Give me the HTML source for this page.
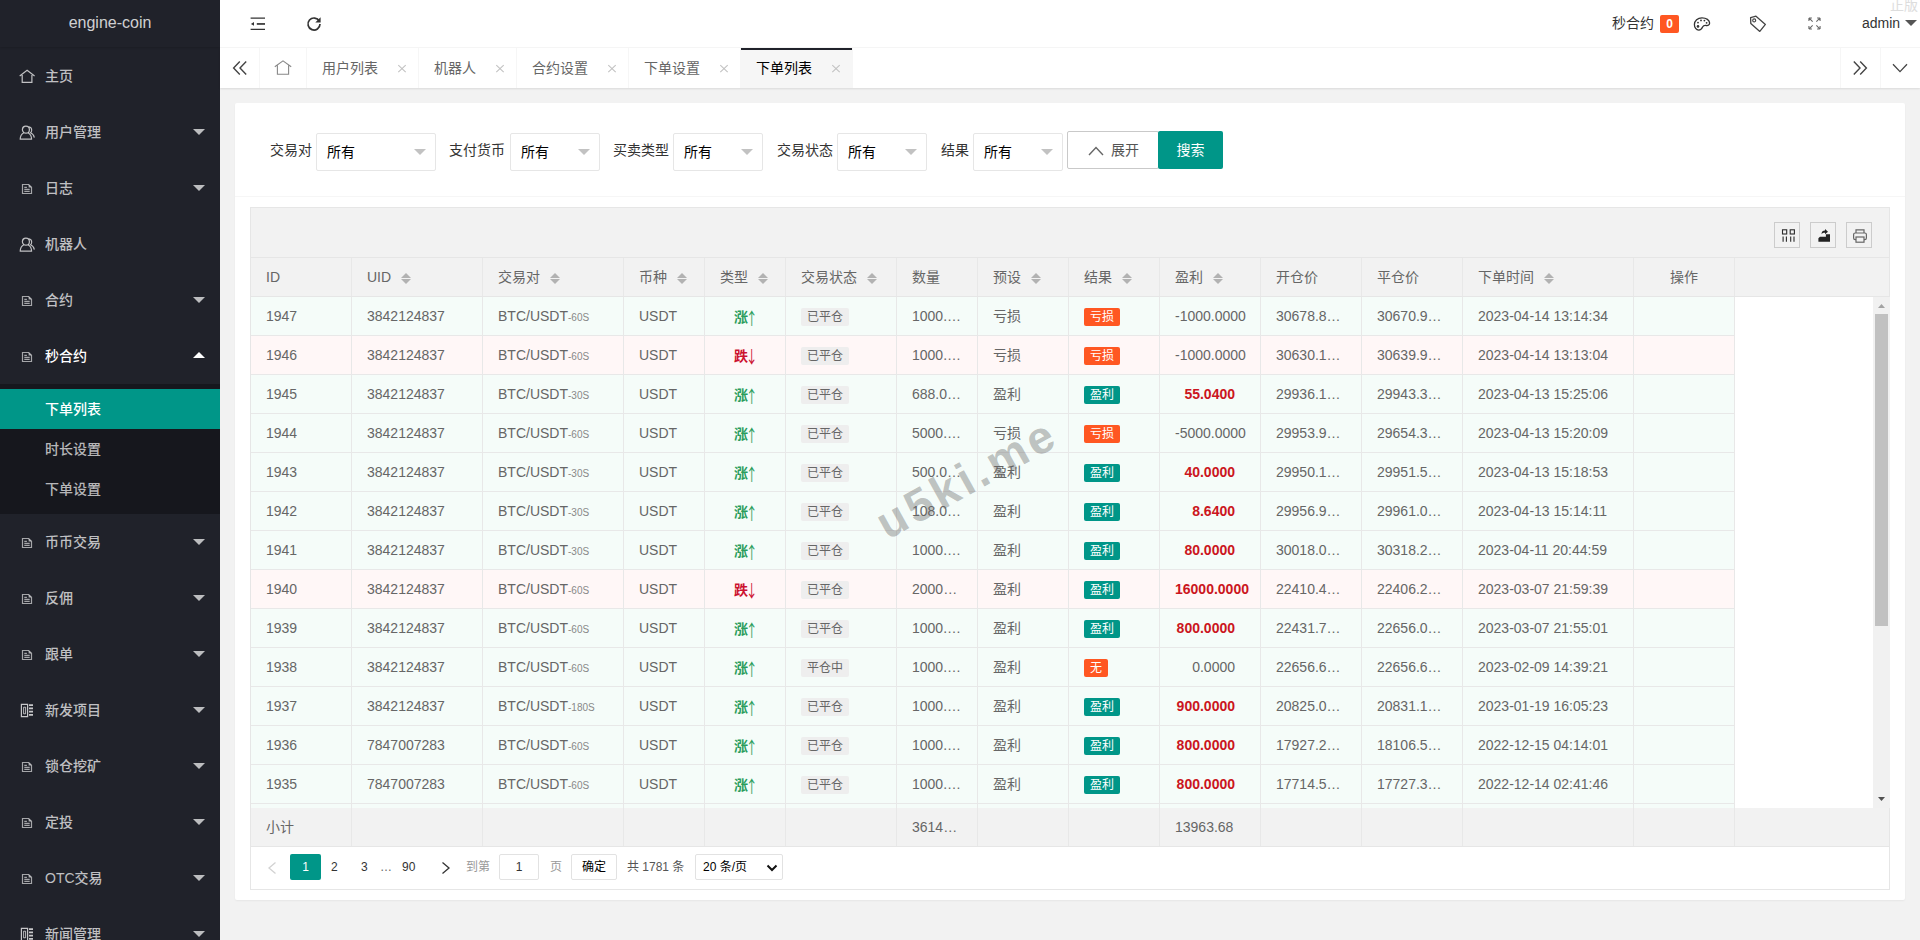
<!DOCTYPE html>
<html lang="zh-CN">
<head>
<meta charset="utf-8">
<title>engine-coin</title>
<style>
*{box-sizing:border-box;margin:0;padding:0}
html,body{width:1920px;height:940px;overflow:hidden;background:#f2f2f2}
body{font:14px/24px "Liberation Sans","Noto Sans CJK SC",sans-serif;color:#333;position:relative}
i{font-style:normal}
/* side */
.side{position:absolute;left:0;top:0;width:220px;height:940px;background:#20222a;overflow:hidden;color:rgba(255,255,255,.8)}
.logo{position:absolute;left:0;top:0;width:220px;height:47px;line-height:45px;text-align:center;font-size:16px;color:rgba(255,255,255,.8);box-shadow:0 1px 2px 0 rgba(0,0,0,.15)}
.mi{position:absolute;left:0;width:220px;height:56px;line-height:56px;color:rgba(255,255,255,.72);font-size:14px;font-weight:500}
.mi.on{color:#fff}
.mi .ic{position:absolute;color:rgba(255,255,255,.72)}
.mi .ic.h{left:19px;top:21px}
.mi .ic.u{left:19px;top:21px}
.mi .ic.f{left:21px;top:23px;color:rgba(255,255,255,.6)}
.mi .ic.t{left:20px;top:21px;color:rgba(255,255,255,.75)}
.mi span{position:absolute;left:45px;top:0}
.arr{position:absolute;right:15px;top:50%;margin-top:-3px;border:6px solid transparent;border-top-color:rgba(255,255,255,.7);border-bottom-width:0}
.arr.up{border-top-width:0;border-bottom:6px solid #fff;margin-top:-4px}
.sub{position:absolute;left:0;top:384px;width:220px;height:130px;background:rgba(0,0,0,.3);padding:5px 0}
.sub div{height:40px;line-height:40px;padding-left:45px;color:rgba(255,255,255,.7);font-weight:500}
.sub div.this{background:#009688;color:#fff}
/* header */
.hd{position:absolute;left:220px;top:0;width:1700px;height:48px;background:#fff;border-bottom:1px solid #f6f6f6}
.tabs{position:absolute;left:220px;top:48px;width:1700px;height:40px;background:#fff;box-shadow:0 1px 2px 0 rgba(0,0,0,.1)}
.tab{position:absolute;top:0;height:40px;line-height:40px;border-right:1px solid #f6f6f6;color:#666;padding-left:15px;font-size:14px}
.tab.this{background:#f6f6f6;color:#000}
.tab.this:before{content:"";position:absolute;left:0;top:0;width:100%;height:2px;background:#20222a}
.tab .x{position:absolute;right:9px;top:14px;width:14px;height:14px}
.tb{position:absolute;top:0;width:40px;height:40px;border-right:1px solid #f6f6f6}
.tbl{border-right:0;border-left:1px solid #f6f6f6}
/* card */
.card{position:absolute;left:235px;top:103px;width:1670px;height:797px;background:#fff;border-radius:2px;box-shadow:0 1px 2px 0 rgba(0,0,0,.05)}
.cline{position:absolute;left:0;top:93px;width:1670px;height:1px;background:#f6f6f6}
.lb{position:absolute;top:35px;height:24px;line-height:24px;font-size:14px;color:#333;white-space:nowrap}
.sel{position:absolute;top:30px;height:38px;border:1px solid #e6e6e6;border-radius:2px;background:#fff;padding-left:10px;line-height:37px;color:#000;font-size:14px}
.sel i{position:absolute;right:9px;top:50%;margin-top:-3px;border:6px solid transparent;border-top-color:#c2c2c2;border-bottom-width:0}
.btn{position:absolute;top:28px;height:38px;line-height:38px;font-size:14px;text-align:center;border-radius:2px}
.btn1{left:832px;width:92px;border:1px solid #c9c9c9;background:#fff;color:#555;line-height:36px}
.btn2{left:923px;width:65px;background:#009688;color:#fff}
/* table */
.tv{position:absolute;left:250px;top:207px;width:1640px;height:683px;border:1px solid #e6e6e6;background:#fff}
.tool{position:absolute;left:0;top:0;width:1638px;height:50px;background:#f2f2f2;border-bottom:1px solid #e6e6e6}
.tbtn{position:absolute;top:14px;width:26px;height:26px;border:1px solid #ccc;background:transparent}
.tv table{border-collapse:separate;border-spacing:0}
.tv th,.tv td{border-right:1px solid #e8e8e8;border-bottom:1px solid #e8e8e8;padding:5px 0;height:39px;font-weight:400;text-align:left;font-size:14px;color:#666}
.c{height:28px;line-height:28px;padding:0 15px;overflow:hidden;white-space:nowrap;position:relative}
.thd{position:absolute;left:0;top:50px;width:1638px;height:39px;background:#f2f2f2;border-bottom:1px solid #e6e6e6;overflow:hidden}
.tbd{position:absolute;left:0;top:89px;width:1638px;height:511px;overflow:hidden;background:#fff}
.ttl{position:absolute;left:0;top:600px;width:1638px;height:39px;background:#f2f2f2;border-bottom:1px solid #e6e6e6;overflow:hidden}
.ttl td{border-bottom:0;height:38px}
tr.up td{background:#f5fcf9}
tr.down td{background:#fff7f7}
small{font-size:10px;color:#888}
.sort{display:inline-block;position:relative;width:10px;height:20px;margin-left:10px;vertical-align:middle;top:-1px}
.sort i{position:absolute;left:0;border:5px solid transparent}
.sort .su{top:6px;border-top-width:0;border-bottom-color:#b2b2b2}
.sort .sd{top:12px;border-bottom-width:0;border-top-color:#b2b2b2}
.t-up{color:#2a9d5c;font-weight:700;position:relative;top:1px}
.ar{display:inline-block;font-family:'Noto Sans CJK SC',sans-serif;font-weight:400;font-size:17px;line-height:20px;width:8px;text-indent:-5px;transform:scaleX(.7);position:relative;top:3px;vertical-align:baseline}
.t-down .ar{top:2px}
.t-down{color:#cc1230;font-weight:700;position:relative;top:1px}
td.ct .c{text-align:center}
.st{display:inline-block;height:18px;line-height:18px;padding:0 6px;background:#eee;border-radius:2px;font-size:12px;color:#666;vertical-align:middle;position:relative;top:0}
.bd{display:inline-block;height:18px;line-height:18px;padding:0 6px;border-radius:2px;font-size:12px;color:#fff;vertical-align:middle;position:relative;top:0}
.bd-o{background:#ff5722}
.bd-g{background:#009688}
.pf{display:inline-block;width:60px;text-align:right;white-space:nowrap;direction:ltr}
.pfb{color:#cb1520;font-weight:700}
.sb{position:absolute;left:1622px;top:89px;width:17px;height:511px;background:#f1f1f1}
.sbt{position:absolute;left:2px;top:17px;width:13px;height:312px;background:#c1c1c1}
.pg{position:absolute;left:0;top:640px;width:1638px;height:41px;font-size:12px;color:#333}
.pg span,.pg b{position:absolute;top:6px;height:26px;line-height:26px;font-weight:400;white-space:nowrap}
.wm{position:absolute;left:850px;top:451px;width:230px;height:56px;line-height:56px;font-size:46px;font-weight:700;color:rgba(100,100,100,.4);transform:rotate(-29deg);text-align:center;letter-spacing:4px;padding-left:4px;white-space:nowrap}
</style>
</head>
<body>
<div class="side">
<div class="logo">engine-coin</div>
<div class="mi" style="top:48px"><svg class="ic h" viewBox="0 0 17 15" width="17" height="15"><path d="M0.700 6.900L8.100 1.200l7.500 5.700M3.200 6v7.400h9.700V6" fill="none" stroke="currentColor" stroke-width="1.200"/></svg><span>主页</span></div>
<div class="mi" style="top:104px"><svg class="ic u" viewBox="0 0 17 16" width="17" height="16"><circle cx="6.900" cy="4.700" r="3.500" fill="none" stroke="currentColor" stroke-width="1.200"/><path d="M4.800 7.800Q1.300 9.600 1.200 14.200H12.600Q12.500 9.600 9 7.800" fill="none" stroke="currentColor" stroke-width="1.200" stroke-linejoin="round"/><path d="M9.800 1.700Q12.800 2.200 12.700 5.200Q12.600 6.800 11.500 7.700Q14.900 9.200 15.300 12.600" fill="none" stroke="currentColor" stroke-width="1.100"/></svg><span>用户管理</span><i class="arr"></i></div>
<div class="mi" style="top:160px"><svg class="ic f" viewBox="0 0 12 12" width="12" height="12"><path d="M1.500 1.500h6.200l2.800 2.800v6.200H1.500z" fill="none" stroke="currentColor" stroke-width="1.200"/><path d="M3.300 4.300h2.600M3.300 6.300h5.400M3.300 8.300h5.400" fill="none" stroke="currentColor" stroke-width="1.200"/><path d="M7.600 1.600v2.800h2.800" fill="currentColor" stroke="none"/></svg><span>日志</span><i class="arr"></i></div>
<div class="mi" style="top:216px"><svg class="ic u" viewBox="0 0 17 16" width="17" height="16"><circle cx="6.900" cy="4.700" r="3.500" fill="none" stroke="currentColor" stroke-width="1.200"/><path d="M4.800 7.800Q1.300 9.600 1.200 14.200H12.600Q12.500 9.600 9 7.800" fill="none" stroke="currentColor" stroke-width="1.200" stroke-linejoin="round"/><path d="M9.800 1.700Q12.800 2.200 12.700 5.200Q12.600 6.800 11.500 7.700Q14.900 9.200 15.300 12.600" fill="none" stroke="currentColor" stroke-width="1.100"/></svg><span>机器人</span></div>
<div class="mi" style="top:272px"><svg class="ic f" viewBox="0 0 12 12" width="12" height="12"><path d="M1.500 1.500h6.200l2.800 2.800v6.200H1.500z" fill="none" stroke="currentColor" stroke-width="1.200"/><path d="M3.300 4.300h2.600M3.300 6.300h5.400M3.300 8.300h5.400" fill="none" stroke="currentColor" stroke-width="1.200"/><path d="M7.600 1.600v2.800h2.800" fill="currentColor" stroke="none"/></svg><span>合约</span><i class="arr"></i></div>
<div class="mi on" style="top:328px"><svg class="ic f" viewBox="0 0 12 12" width="12" height="12"><path d="M1.500 1.500h6.200l2.800 2.800v6.200H1.500z" fill="none" stroke="currentColor" stroke-width="1.200"/><path d="M3.300 4.300h2.600M3.300 6.300h5.400M3.300 8.300h5.400" fill="none" stroke="currentColor" stroke-width="1.200"/><path d="M7.600 1.600v2.800h2.800" fill="currentColor" stroke="none"/></svg><span>秒合约</span><i class="arr up"></i></div>
<div class="mi" style="top:514px"><svg class="ic f" viewBox="0 0 12 12" width="12" height="12"><path d="M1.500 1.500h6.200l2.800 2.800v6.200H1.500z" fill="none" stroke="currentColor" stroke-width="1.200"/><path d="M3.300 4.300h2.600M3.300 6.300h5.400M3.300 8.300h5.400" fill="none" stroke="currentColor" stroke-width="1.200"/><path d="M7.600 1.600v2.800h2.800" fill="currentColor" stroke="none"/></svg><span>币币交易</span><i class="arr"></i></div>
<div class="mi" style="top:570px"><svg class="ic f" viewBox="0 0 12 12" width="12" height="12"><path d="M1.500 1.500h6.200l2.800 2.800v6.200H1.500z" fill="none" stroke="currentColor" stroke-width="1.200"/><path d="M3.300 4.300h2.600M3.300 6.300h5.400M3.300 8.300h5.400" fill="none" stroke="currentColor" stroke-width="1.200"/><path d="M7.600 1.600v2.800h2.800" fill="currentColor" stroke="none"/></svg><span>反佣</span><i class="arr"></i></div>
<div class="mi" style="top:626px"><svg class="ic f" viewBox="0 0 12 12" width="12" height="12"><path d="M1.500 1.500h6.200l2.800 2.800v6.200H1.500z" fill="none" stroke="currentColor" stroke-width="1.200"/><path d="M3.300 4.300h2.600M3.300 6.300h5.400M3.300 8.300h5.400" fill="none" stroke="currentColor" stroke-width="1.200"/><path d="M7.600 1.600v2.800h2.800" fill="currentColor" stroke="none"/></svg><span>跟单</span><i class="arr"></i></div>
<div class="mi" style="top:682px"><svg class="ic t" viewBox="0 0 14 15" width="14" height="15"><path d="M1.400 1.400h6.200v12.200H1.400z" fill="none" stroke="currentColor" stroke-width="1.200"/><path d="M3.600 4.200h2v6.600h-2z" fill="none" stroke="currentColor" stroke-width=".9"/><path d="M9 2.200h4M9 5.400h4M9 8.600h4M9 11.800h4" stroke="currentColor" stroke-width="1.700" fill="none"/></svg><span>新发项目</span><i class="arr"></i></div>
<div class="mi" style="top:738px"><svg class="ic f" viewBox="0 0 12 12" width="12" height="12"><path d="M1.500 1.500h6.200l2.800 2.800v6.200H1.500z" fill="none" stroke="currentColor" stroke-width="1.200"/><path d="M3.300 4.300h2.600M3.300 6.300h5.400M3.300 8.300h5.400" fill="none" stroke="currentColor" stroke-width="1.200"/><path d="M7.600 1.600v2.800h2.800" fill="currentColor" stroke="none"/></svg><span>锁仓挖矿</span><i class="arr"></i></div>
<div class="mi" style="top:794px"><svg class="ic f" viewBox="0 0 12 12" width="12" height="12"><path d="M1.500 1.500h6.200l2.800 2.800v6.200H1.500z" fill="none" stroke="currentColor" stroke-width="1.200"/><path d="M3.300 4.300h2.600M3.300 6.300h5.400M3.300 8.300h5.400" fill="none" stroke="currentColor" stroke-width="1.200"/><path d="M7.600 1.600v2.800h2.800" fill="currentColor" stroke="none"/></svg><span>定投</span><i class="arr"></i></div>
<div class="mi" style="top:850px"><svg class="ic f" viewBox="0 0 12 12" width="12" height="12"><path d="M1.500 1.500h6.200l2.800 2.800v6.200H1.500z" fill="none" stroke="currentColor" stroke-width="1.200"/><path d="M3.300 4.300h2.600M3.300 6.300h5.400M3.300 8.300h5.400" fill="none" stroke="currentColor" stroke-width="1.200"/><path d="M7.600 1.600v2.800h2.800" fill="currentColor" stroke="none"/></svg><span>OTC交易</span><i class="arr"></i></div>
<div class="mi" style="top:906px"><svg class="ic t" viewBox="0 0 14 15" width="14" height="15"><path d="M1.400 1.400h6.200v12.200H1.400z" fill="none" stroke="currentColor" stroke-width="1.200"/><path d="M3.600 4.200h2v6.600h-2z" fill="none" stroke="currentColor" stroke-width=".9"/><path d="M9 2.200h4M9 5.400h4M9 8.600h4M9 11.800h4" stroke="currentColor" stroke-width="1.700" fill="none"/></svg><span>新闻管理</span><i class="arr"></i></div>
<div class="sub"><div class="this">下单列表</div><div>时长设置</div><div>下单设置</div></div>
</div>

<div class="hd">

<svg style="position:absolute;left:30px;top:16px" width="16" height="16" viewBox="0 0 16 16"><path d="M0.600 2.200h14.400M0.600 13.400h14.400" stroke="#333" stroke-width="1.300" fill="none"/><path d="M6.800 7.950h8.200" stroke="#333" stroke-width="1.700" fill="none"/><path d="M0.900 7.950l3.100-1.900v3.800z" fill="#333"/></svg>
<svg style="position:absolute;left:86px;top:16px" width="16" height="16" viewBox="0 0 16 16"><path d="M13.300 5.200A6 6 0 1 0 14 8" stroke="#333" stroke-width="1.700" fill="none"/><path d="M14.600 1.200v5.300h-5.300z" fill="#333"/></svg>
<span style="position:absolute;left:1392px;top:11px;line-height:24px;font-size:14px;color:#333">秒合约</span>
<span style="position:absolute;left:1440px;top:15px;width:19px;height:18px;line-height:18px;background:#ff5722;border-radius:2px;color:#fff;font-size:12px;font-weight:700;text-align:center">0</span>
<svg style="position:absolute;left:1473px;top:16px" width="18" height="16" viewBox="0 0 18 16"><path d="M9 1.800c4.300 0 7.600 2.400 7.600 5.200 0 2-1.500 2.700-3.200 2.500-1.800-.3-3.200.3-3.800 1.600-.7 1.600-1.800 3-3.800 3C3.200 14.100 1.400 11.600 1.400 8.600 1.400 4.600 4.700 1.800 9 1.800z" fill="none" stroke="#333" stroke-width="1.300"/><circle cx="5" cy="10.400" r="1.300" fill="#333"/><circle cx="5" cy="6.600" r=".9" fill="#333"/><circle cx="8" cy="4.400" r=".9" fill="#333"/><circle cx="11.400" cy="4.600" r=".9" fill="#333"/><circle cx="13.600" cy="6.800" r=".9" fill="#333"/></svg>
<svg style="position:absolute;left:1529px;top:15px" width="18" height="18" viewBox="0 0 18 18"><path d="M1.600 2.600l5.400-1.400 9.400 8.200-5.600 7-9-8z" fill="none" stroke="#444" stroke-width="1.300" stroke-linejoin="round"/><circle cx="5.200" cy="5.400" r="1.500" fill="none" stroke="#444" stroke-width="1.100"/></svg>
<svg style="position:absolute;left:1587.500px;top:17px" width="13" height="13" viewBox="0 0 14 14"><g stroke="#666" stroke-width="1.150" fill="none"><path d="M1 1l4 4M1 1h3.200M1 1v3.200"/><path d="M13 1l-4 4M13 1h-3.200M13 1v3.200"/><path d="M1 13l4-4M1 13h3.200M1 13v-3.200"/><path d="M13 13l-4-4M13 13h-3.200M13 13v-3.200"/></g></svg>
<span style="position:absolute;left:1642px;top:11px;line-height:24px;font-size:14px;color:#333">admin</span>
<i style="position:absolute;left:1685px;top:20px;border:6px solid transparent;border-top-color:#555;border-bottom-width:0"></i>
<span style="position:absolute;left:1670px;top:-5px;line-height:20px;font-size:14px;color:#ddd;white-space:nowrap">正版</span>

</div>

<div class="tabs">

<div class="tb" style="left:0"><svg style="position:absolute;left:12px;top:12px" width="16" height="16" viewBox="0 0 16 16"><path d="M7.800 1.500L1.600 8l6.200 6.500M14.200 1.500L8 8l6.200 6.500" stroke="#444" stroke-width="1.400" fill="none"/></svg></div>
<div class="tab" style="left:40px;width:47px;padding:0"><svg style="position:absolute;left:14px;top:12px" width="18" height="16" viewBox="0 0 18 16"><path d="M.8 6.800L9 .9l8.200 5.900M3.400 5.600v8.600h11.200V5.600" fill="none" stroke="#888" stroke-width="1.100"/></svg></div>
<div class="tab" style="left:87px;width:112px">用户列表<svg class="x" viewBox="0 0 14 14"><path d="M3.300 3.200l7.400 7M10.700 3.200l-7.400 7" stroke="#c2c2c2" stroke-width="1.100" fill="none"/></svg></div><div class="tab" style="left:199px;width:98px">机器人<svg class="x" viewBox="0 0 14 14"><path d="M3.300 3.200l7.400 7M10.700 3.200l-7.400 7" stroke="#c2c2c2" stroke-width="1.100" fill="none"/></svg></div><div class="tab" style="left:297px;width:112px">合约设置<svg class="x" viewBox="0 0 14 14"><path d="M3.300 3.200l7.400 7M10.700 3.200l-7.400 7" stroke="#c2c2c2" stroke-width="1.100" fill="none"/></svg></div><div class="tab" style="left:409px;width:112px">下单设置<svg class="x" viewBox="0 0 14 14"><path d="M3.300 3.200l7.400 7M10.700 3.200l-7.400 7" stroke="#c2c2c2" stroke-width="1.100" fill="none"/></svg></div><div class="tab this" style="left:521px;width:112px">下单列表<svg class="x" viewBox="0 0 14 14"><path d="M3.300 3.200l7.400 7M10.700 3.200l-7.400 7" stroke="#c2c2c2" stroke-width="1.100" fill="none"/></svg></div>
<div class="tb tbl" style="left:1620px"><svg style="position:absolute;left:11px;top:12px" width="16" height="16" viewBox="0 0 16 16"><path d="M1.800 1.500L8 8l-6.200 6.500M8.200 1.500L14.400 8l-6.200 6.500" stroke="#444" stroke-width="1.400" fill="none"/></svg></div>
<div class="tb tbl" style="left:1660px"><svg style="position:absolute;left:11px;top:12px" width="16" height="16" viewBox="0 0 16 16"><path d="M1 4.200l7 7.400 7-7.400" stroke="#444" stroke-width="1.300" fill="none"/></svg></div>

</div>

<div class="card">
<div class="cline"></div>
<span class="lb" style="left:35px">交易对</span><div class="sel" style="left:81px;width:120px">所有<i></i></div>
<span class="lb" style="left:214px">支付货币</span><div class="sel" style="left:275px;width:90px">所有<i></i></div>
<span class="lb" style="left:378px">买卖类型</span><div class="sel" style="left:438px;width:90px">所有<i></i></div>
<span class="lb" style="left:542px">交易状态</span><div class="sel" style="left:602px;width:90px">所有<i></i></div>
<span class="lb" style="left:706px">结果</span><div class="sel" style="left:738px;width:90px">所有<i></i></div>
<div class="btn btn1"><svg width="16" height="10" viewBox="0 0 16 10" style="position:absolute;left:20px;top:14px"><path d="M1 9l7-7.500 7 7.500" fill="none" stroke="#666" stroke-width="1.400"/></svg><span style="position:absolute;left:43px;top:0">展开</span></div>
<div class="btn btn2">搜索</div>
</div>

<div class="tv">
<div class="tool">

<div class="tbtn" style="left:1523px"><svg style="position:absolute;left:1px;top:1px" width="24" height="24" viewBox="0 0 24 24"><g fill="none" stroke="#2b2b2b" stroke-width="1.100"><rect x="6.500" y="5.800" width="4.200" height="4.200"/><rect x="14.200" y="5.800" width="4.200" height="4.200"/><path d="M7.100 12.400v5.300M10.400 12.400v5.300M14.700 12.400v5.300M18 12.400v5.300"/></g></svg></div>
<div class="tbtn" style="left:1559px"><svg style="position:absolute;left:0;top:0" width="24" height="24" viewBox="0 0 24 24"><path d="M7.400 18.700V15.300L9 13.700H14.900V11.300H19V18.700Z" fill="#222"/><path d="M10.500 11.200C10.500 8.600 12 7.600 14 7.600V6.100L17 8.700L14 11.300V9.700C12.400 9.700 11.300 10.100 10.500 11.200Z" fill="#222"/></svg></div>
<div class="tbtn" style="left:1595px"><svg style="position:absolute;left:1px;top:1px" width="24" height="24" viewBox="0 0 24 24"><g fill="none" stroke="#666" stroke-width="1.200"><path d="M8 9V5.800h8V9"/><rect x="5.600" y="9" width="12.800" height="6.600" rx="1.600"/><rect x="8" y="13" width="8" height="5.200" fill="#f2f2f2"/></g></svg></div>

</div>
<div class="thd"><table><tr><th><div class="c" style="width:100px"><span>ID</span></div></th><th><div class="c" style="width:130px"><span>UID</span><span class="sort"><i class="su"></i><i class="sd"></i></span></div></th><th><div class="c" style="width:140px"><span>交易对</span><span class="sort"><i class="su"></i><i class="sd"></i></span></div></th><th><div class="c" style="width:80px"><span>币种</span><span class="sort"><i class="su"></i><i class="sd"></i></span></div></th><th><div class="c" style="width:80px"><span>类型</span><span class="sort"><i class="su"></i><i class="sd"></i></span></div></th><th><div class="c" style="width:110px"><span>交易状态</span><span class="sort"><i class="su"></i><i class="sd"></i></span></div></th><th><div class="c" style="width:80px"><span>数量</span></div></th><th><div class="c" style="width:90px"><span>预设</span><span class="sort"><i class="su"></i><i class="sd"></i></span></div></th><th><div class="c" style="width:90px"><span>结果</span><span class="sort"><i class="su"></i><i class="sd"></i></span></div></th><th><div class="c" style="width:100px"><span>盈利</span><span class="sort"><i class="su"></i><i class="sd"></i></span></div></th><th><div class="c" style="width:100px"><span>开仓价</span></div></th><th><div class="c" style="width:100px"><span>平仓价</span></div></th><th><div class="c" style="width:170px"><span>下单时间</span><span class="sort"><i class="su"></i><i class="sd"></i></span></div></th><th><div class="c" style="width:100px;text-align:center"><span>操作</span></div></th></tr></table></div>
<div class="tbd"><table>
<tr class="up"><td><div class="c" style="width:100px">1947</div></td><td><div class="c" style="width:130px">3842124837</div></td><td><div class="c" style="width:140px">BTC/USDT<small>-60S</small></div></td><td><div class="c" style="width:80px">USDT</div></td><td class="ct"><div class="c" style="width:80px"><span class="t-up">涨<i class="ar">↑</i></span></div></td><td><div class="c" style="width:110px"><span class="st">已平仓</span></div></td><td><div class="c" style="width:80px">1000.…</div></td><td><div class="c" style="width:90px">亏损</div></td><td><div class="c" style="width:90px"><span class="bd bd-o">亏损</span></div></td><td><div class="c" style="width:100px"><span class="pf">-1000.0000</span></div></td><td><div class="c" style="width:100px">30678.8…</div></td><td><div class="c" style="width:100px">30670.9…</div></td><td><div class="c" style="width:170px">2023-04-14 13:14:34</div></td><td><div class="c" style="width:100px"></div></td></tr>
<tr class="down"><td><div class="c" style="width:100px">1946</div></td><td><div class="c" style="width:130px">3842124837</div></td><td><div class="c" style="width:140px">BTC/USDT<small>-60S</small></div></td><td><div class="c" style="width:80px">USDT</div></td><td class="ct"><div class="c" style="width:80px"><span class="t-down">跌<i class="ar">↓</i></span></div></td><td><div class="c" style="width:110px"><span class="st">已平仓</span></div></td><td><div class="c" style="width:80px">1000.…</div></td><td><div class="c" style="width:90px">亏损</div></td><td><div class="c" style="width:90px"><span class="bd bd-o">亏损</span></div></td><td><div class="c" style="width:100px"><span class="pf">-1000.0000</span></div></td><td><div class="c" style="width:100px">30630.1…</div></td><td><div class="c" style="width:100px">30639.9…</div></td><td><div class="c" style="width:170px">2023-04-14 13:13:04</div></td><td><div class="c" style="width:100px"></div></td></tr>
<tr class="up"><td><div class="c" style="width:100px">1945</div></td><td><div class="c" style="width:130px">3842124837</div></td><td><div class="c" style="width:140px">BTC/USDT<small>-30S</small></div></td><td><div class="c" style="width:80px">USDT</div></td><td class="ct"><div class="c" style="width:80px"><span class="t-up">涨<i class="ar">↑</i></span></div></td><td><div class="c" style="width:110px"><span class="st">已平仓</span></div></td><td><div class="c" style="width:80px">688.0…</div></td><td><div class="c" style="width:90px">盈利</div></td><td><div class="c" style="width:90px"><span class="bd bd-g">盈利</span></div></td><td><div class="c" style="width:100px"><span class="pf pfb">55.0400</span></div></td><td><div class="c" style="width:100px">29936.1…</div></td><td><div class="c" style="width:100px">29943.3…</div></td><td><div class="c" style="width:170px">2023-04-13 15:25:06</div></td><td><div class="c" style="width:100px"></div></td></tr>
<tr class="up"><td><div class="c" style="width:100px">1944</div></td><td><div class="c" style="width:130px">3842124837</div></td><td><div class="c" style="width:140px">BTC/USDT<small>-60S</small></div></td><td><div class="c" style="width:80px">USDT</div></td><td class="ct"><div class="c" style="width:80px"><span class="t-up">涨<i class="ar">↑</i></span></div></td><td><div class="c" style="width:110px"><span class="st">已平仓</span></div></td><td><div class="c" style="width:80px">5000.…</div></td><td><div class="c" style="width:90px">亏损</div></td><td><div class="c" style="width:90px"><span class="bd bd-o">亏损</span></div></td><td><div class="c" style="width:100px"><span class="pf">-5000.0000</span></div></td><td><div class="c" style="width:100px">29953.9…</div></td><td><div class="c" style="width:100px">29654.3…</div></td><td><div class="c" style="width:170px">2023-04-13 15:20:09</div></td><td><div class="c" style="width:100px"></div></td></tr>
<tr class="up"><td><div class="c" style="width:100px">1943</div></td><td><div class="c" style="width:130px">3842124837</div></td><td><div class="c" style="width:140px">BTC/USDT<small>-30S</small></div></td><td><div class="c" style="width:80px">USDT</div></td><td class="ct"><div class="c" style="width:80px"><span class="t-up">涨<i class="ar">↑</i></span></div></td><td><div class="c" style="width:110px"><span class="st">已平仓</span></div></td><td><div class="c" style="width:80px">500.0…</div></td><td><div class="c" style="width:90px">盈利</div></td><td><div class="c" style="width:90px"><span class="bd bd-g">盈利</span></div></td><td><div class="c" style="width:100px"><span class="pf pfb">40.0000</span></div></td><td><div class="c" style="width:100px">29950.1…</div></td><td><div class="c" style="width:100px">29951.5…</div></td><td><div class="c" style="width:170px">2023-04-13 15:18:53</div></td><td><div class="c" style="width:100px"></div></td></tr>
<tr class="up"><td><div class="c" style="width:100px">1942</div></td><td><div class="c" style="width:130px">3842124837</div></td><td><div class="c" style="width:140px">BTC/USDT<small>-30S</small></div></td><td><div class="c" style="width:80px">USDT</div></td><td class="ct"><div class="c" style="width:80px"><span class="t-up">涨<i class="ar">↑</i></span></div></td><td><div class="c" style="width:110px"><span class="st">已平仓</span></div></td><td><div class="c" style="width:80px">108.0…</div></td><td><div class="c" style="width:90px">盈利</div></td><td><div class="c" style="width:90px"><span class="bd bd-g">盈利</span></div></td><td><div class="c" style="width:100px"><span class="pf pfb">8.6400</span></div></td><td><div class="c" style="width:100px">29956.9…</div></td><td><div class="c" style="width:100px">29961.0…</div></td><td><div class="c" style="width:170px">2023-04-13 15:14:11</div></td><td><div class="c" style="width:100px"></div></td></tr>
<tr class="up"><td><div class="c" style="width:100px">1941</div></td><td><div class="c" style="width:130px">3842124837</div></td><td><div class="c" style="width:140px">BTC/USDT<small>-30S</small></div></td><td><div class="c" style="width:80px">USDT</div></td><td class="ct"><div class="c" style="width:80px"><span class="t-up">涨<i class="ar">↑</i></span></div></td><td><div class="c" style="width:110px"><span class="st">已平仓</span></div></td><td><div class="c" style="width:80px">1000.…</div></td><td><div class="c" style="width:90px">盈利</div></td><td><div class="c" style="width:90px"><span class="bd bd-g">盈利</span></div></td><td><div class="c" style="width:100px"><span class="pf pfb">80.0000</span></div></td><td><div class="c" style="width:100px">30018.0…</div></td><td><div class="c" style="width:100px">30318.2…</div></td><td><div class="c" style="width:170px">2023-04-11 20:44:59</div></td><td><div class="c" style="width:100px"></div></td></tr>
<tr class="down"><td><div class="c" style="width:100px">1940</div></td><td><div class="c" style="width:130px">3842124837</div></td><td><div class="c" style="width:140px">BTC/USDT<small>-60S</small></div></td><td><div class="c" style="width:80px">USDT</div></td><td class="ct"><div class="c" style="width:80px"><span class="t-down">跌<i class="ar">↓</i></span></div></td><td><div class="c" style="width:110px"><span class="st">已平仓</span></div></td><td><div class="c" style="width:80px">2000…</div></td><td><div class="c" style="width:90px">盈利</div></td><td><div class="c" style="width:90px"><span class="bd bd-g">盈利</span></div></td><td><div class="c" style="width:100px"><span class="pf pfb">16000.0000</span></div></td><td><div class="c" style="width:100px">22410.4…</div></td><td><div class="c" style="width:100px">22406.2…</div></td><td><div class="c" style="width:170px">2023-03-07 21:59:39</div></td><td><div class="c" style="width:100px"></div></td></tr>
<tr class="up"><td><div class="c" style="width:100px">1939</div></td><td><div class="c" style="width:130px">3842124837</div></td><td><div class="c" style="width:140px">BTC/USDT<small>-60S</small></div></td><td><div class="c" style="width:80px">USDT</div></td><td class="ct"><div class="c" style="width:80px"><span class="t-up">涨<i class="ar">↑</i></span></div></td><td><div class="c" style="width:110px"><span class="st">已平仓</span></div></td><td><div class="c" style="width:80px">1000.…</div></td><td><div class="c" style="width:90px">盈利</div></td><td><div class="c" style="width:90px"><span class="bd bd-g">盈利</span></div></td><td><div class="c" style="width:100px"><span class="pf pfb">800.0000</span></div></td><td><div class="c" style="width:100px">22431.7…</div></td><td><div class="c" style="width:100px">22656.0…</div></td><td><div class="c" style="width:170px">2023-03-07 21:55:01</div></td><td><div class="c" style="width:100px"></div></td></tr>
<tr class="up"><td><div class="c" style="width:100px">1938</div></td><td><div class="c" style="width:130px">3842124837</div></td><td><div class="c" style="width:140px">BTC/USDT<small>-60S</small></div></td><td><div class="c" style="width:80px">USDT</div></td><td class="ct"><div class="c" style="width:80px"><span class="t-up">涨<i class="ar">↑</i></span></div></td><td><div class="c" style="width:110px"><span class="st">平仓中</span></div></td><td><div class="c" style="width:80px">1000.…</div></td><td><div class="c" style="width:90px">盈利</div></td><td><div class="c" style="width:90px"><span class="bd bd-o">无</span></div></td><td><div class="c" style="width:100px"><span class="pf">0.0000</span></div></td><td><div class="c" style="width:100px">22656.6…</div></td><td><div class="c" style="width:100px">22656.6…</div></td><td><div class="c" style="width:170px">2023-02-09 14:39:21</div></td><td><div class="c" style="width:100px"></div></td></tr>
<tr class="up"><td><div class="c" style="width:100px">1937</div></td><td><div class="c" style="width:130px">3842124837</div></td><td><div class="c" style="width:140px">BTC/USDT<small>-180S</small></div></td><td><div class="c" style="width:80px">USDT</div></td><td class="ct"><div class="c" style="width:80px"><span class="t-up">涨<i class="ar">↑</i></span></div></td><td><div class="c" style="width:110px"><span class="st">已平仓</span></div></td><td><div class="c" style="width:80px">1000.…</div></td><td><div class="c" style="width:90px">盈利</div></td><td><div class="c" style="width:90px"><span class="bd bd-g">盈利</span></div></td><td><div class="c" style="width:100px"><span class="pf pfb">900.0000</span></div></td><td><div class="c" style="width:100px">20825.0…</div></td><td><div class="c" style="width:100px">20831.1…</div></td><td><div class="c" style="width:170px">2023-01-19 16:05:23</div></td><td><div class="c" style="width:100px"></div></td></tr>
<tr class="up"><td><div class="c" style="width:100px">1936</div></td><td><div class="c" style="width:130px">7847007283</div></td><td><div class="c" style="width:140px">BTC/USDT<small>-60S</small></div></td><td><div class="c" style="width:80px">USDT</div></td><td class="ct"><div class="c" style="width:80px"><span class="t-up">涨<i class="ar">↑</i></span></div></td><td><div class="c" style="width:110px"><span class="st">已平仓</span></div></td><td><div class="c" style="width:80px">1000.…</div></td><td><div class="c" style="width:90px">盈利</div></td><td><div class="c" style="width:90px"><span class="bd bd-g">盈利</span></div></td><td><div class="c" style="width:100px"><span class="pf pfb">800.0000</span></div></td><td><div class="c" style="width:100px">17927.2…</div></td><td><div class="c" style="width:100px">18106.5…</div></td><td><div class="c" style="width:170px">2022-12-15 04:14:01</div></td><td><div class="c" style="width:100px"></div></td></tr>
<tr class="up"><td><div class="c" style="width:100px">1935</div></td><td><div class="c" style="width:130px">7847007283</div></td><td><div class="c" style="width:140px">BTC/USDT<small>-60S</small></div></td><td><div class="c" style="width:80px">USDT</div></td><td class="ct"><div class="c" style="width:80px"><span class="t-up">涨<i class="ar">↑</i></span></div></td><td><div class="c" style="width:110px"><span class="st">已平仓</span></div></td><td><div class="c" style="width:80px">1000.…</div></td><td><div class="c" style="width:90px">盈利</div></td><td><div class="c" style="width:90px"><span class="bd bd-g">盈利</span></div></td><td><div class="c" style="width:100px"><span class="pf pfb">800.0000</span></div></td><td><div class="c" style="width:100px">17714.5…</div></td><td><div class="c" style="width:100px">17727.3…</div></td><td><div class="c" style="width:170px">2022-12-14 02:41:46</div></td><td><div class="c" style="width:100px"></div></td></tr>
<tr class="up"><td><div class="c" style="width:100px">1934</div></td><td><div class="c" style="width:130px">7847007283</div></td><td><div class="c" style="width:140px">BTC/USDT<small>-60S</small></div></td><td><div class="c" style="width:80px">USDT</div></td><td class="ct"><div class="c" style="width:80px"><span class="t-up">涨<i class="ar">↑</i></span></div></td><td><div class="c" style="width:110px"><span class="st">已平仓</span></div></td><td><div class="c" style="width:80px">1000.…</div></td><td><div class="c" style="width:90px">盈利</div></td><td><div class="c" style="width:90px"><span class="bd bd-g">盈利</span></div></td><td><div class="c" style="width:100px"><span class="pf pfb">800.0000</span></div></td><td><div class="c" style="width:100px">17714.5…</div></td><td><div class="c" style="width:100px">17727.3…</div></td><td><div class="c" style="width:170px">2022-12-14 02:40:12</div></td><td><div class="c" style="width:100px"></div></td></tr>
</table></div>
<div class="sb"><div class="sbt"></div>
<svg width="17" height="17" style="position:absolute;left:0;top:0"><path d="M5 11l3.500-4 3.500 4z" fill="#a3a3a3"/></svg>
<svg width="17" height="17" style="position:absolute;left:0;bottom:0"><path d="M5 6l3.500 4 3.500-4z" fill="#505050"/></svg>
</div>
<div class="ttl"><table><tr><td><div class="c" style="width:100px">小计</div></td><td><div class="c" style="width:130px"></div></td><td><div class="c" style="width:140px"></div></td><td><div class="c" style="width:80px"></div></td><td><div class="c" style="width:80px"></div></td><td><div class="c" style="width:110px"></div></td><td><div class="c" style="width:80px">3614…</div></td><td><div class="c" style="width:90px"></div></td><td><div class="c" style="width:90px"></div></td><td><div class="c" style="width:100px">13963.68</div></td><td><div class="c" style="width:100px"></div></td><td><div class="c" style="width:100px"></div></td><td><div class="c" style="width:170px"></div></td><td><div class="c" style="width:100px"></div></td></tr></table></div>
<div class="pg">

<svg style="position:absolute;left:15px;top:12px" width="12" height="16" viewBox="0 0 12 16"><path d="M9.500 2.500L3 8l6.500 5.500" stroke="#d2d2d2" stroke-width="1.300" fill="none"/></svg>
<b style="left:39px;width:31px;height:26px;line-height:26px;background:#009688;color:#fff;text-align:center;border-radius:2px">1</b>
<span style="left:80px">2</span>
<span style="left:110px">3</span>
<span style="left:129px;color:#666">…</span>
<span style="left:151px">90</span>
<svg style="position:absolute;left:189px;top:12px" width="12" height="16" viewBox="0 0 12 16"><path d="M2.500 2.500L9 8l-6.500 5.500" stroke="#333" stroke-width="1.300" fill="none"/></svg>
<span style="left:215px;color:#999">到第</span>
<span style="left:248px;width:40px;height:26px;line-height:24px;border:1px solid #e2e2e2;border-radius:2px;text-align:center;color:#333;background:#fff">1</span>
<span style="left:299px;color:#999">页</span>
<span style="left:320px;width:46px;height:26px;line-height:24px;border:1px solid #e2e2e2;border-radius:2px;text-align:center;color:#000;background:#fff">确定</span>
<span style="left:376px;color:#555">共 1781 条</span>
<span style="left:444px;width:88px;height:26px;line-height:24px;border:1px solid #e2e2e2;border-radius:2px;padding-left:7px;color:#000;background:#fff">20 条/页<svg style="position:absolute;right:4px;top:8px" width="12" height="10" viewBox="0 0 12 10"><path d="M1.500 2.500L6 7l4.500-4.500" stroke="#111" stroke-width="2" fill="none"/></svg></span>

</div>
</div>
<div class="wm">u5ki.me</div>
</body>
</html>
